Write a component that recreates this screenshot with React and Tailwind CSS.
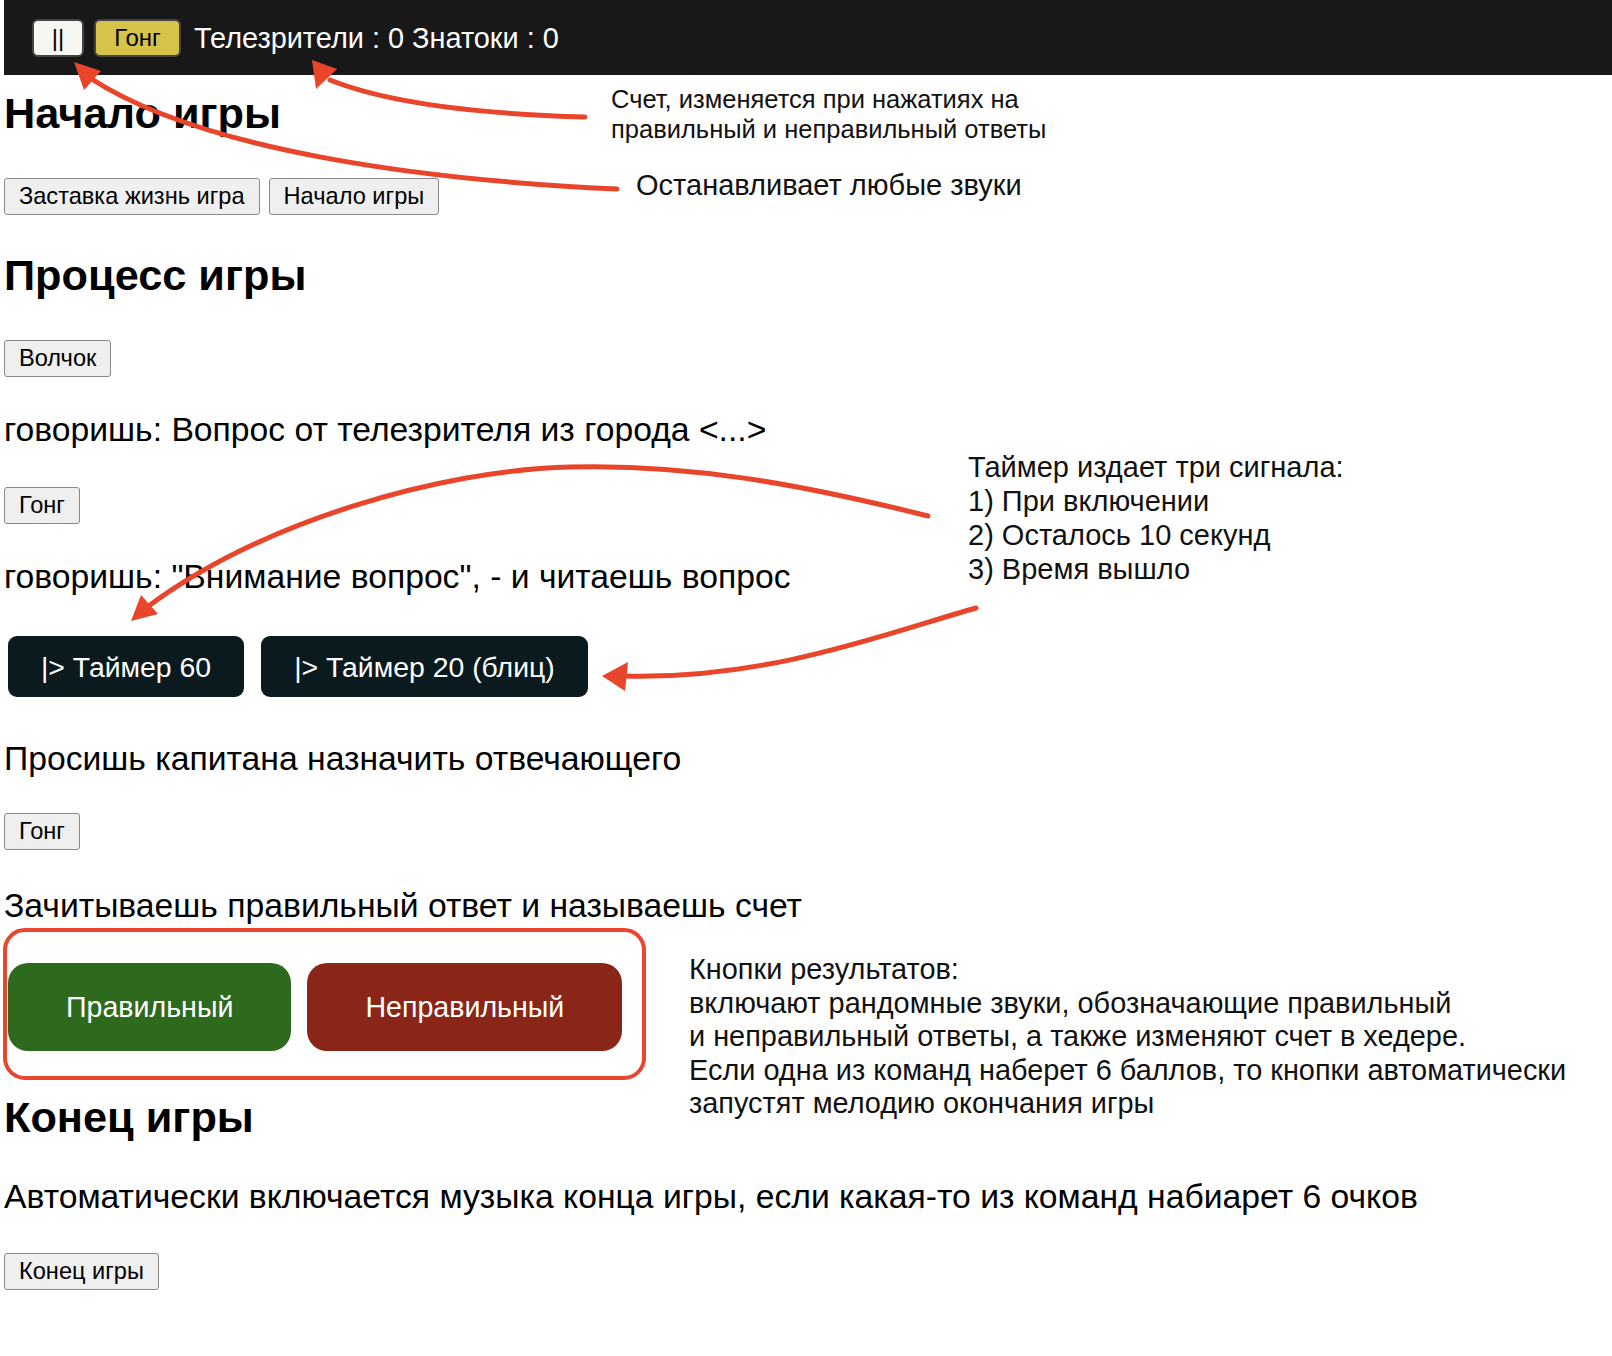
import React from "react";

function Btn({ children }) {
  return (
    <button className="h-[37px] px-[14px] text-[23.6px] leading-[27px] bg-[#efefef] border border-[#8a8a8a] rounded-[3px] text-black">
      {children}
    </button>
  );
}

function Arrows() {
  const c = "#e8452b";
  return (
    <svg
      className="absolute left-0 top-0 pointer-events-none"
      width="1612"
      height="1356"
      viewBox="0 0 1612 1356"
    >
      <g fill="none" stroke={c} strokeWidth="5" strokeLinecap="round">
        <path d="M585,117 C480,114 390,104 330,80" />
        <path d="M617,189 C420,180 200,150 90,78" />
        <path d="M928,516 C800,484 690,464 570,467 C440,470 260,522 146,608" />
        <path d="M976,608 C890,632 770,680 624,676" />
      </g>
      <g fill={c}>
        <polygon points="312,60 337,69 316,89" />
        <polygon points="74,62 101,71 84,90" />
        <polygon points="131,621 158,614 141,595" />
        <polygon points="602,676 628,662 625,691" />
      </g>
    </svg>
  );
}

export default function App() {
  return (
    <div className="relative min-h-[1356px] w-[1612px] bg-white text-black font-['Liberation_Sans',Arial,sans-serif] pl-[4px]">
      <header className="h-[75px] bg-[#181818] flex items-center pl-[28px]">
        <button className="w-[52px] h-[38px] rounded-[6px] border-2 border-[#454545] bg-[#f6f7f2] text-[24px] leading-none text-black">
          ||
        </button>
        <button className="ml-[10px] w-[87px] h-[38px] rounded-[6px] border-2 border-[#454545] bg-[#d5c34a] text-[24px] leading-none text-black">
          Гонг
        </button>
        <span className="ml-[13px] text-[28.9px] leading-[32px] text-white">
          Телезрители : 0 Знатоки : 0
        </span>
      </header>

      <h1 className="mt-[14px] text-[43.3px] leading-[48px] font-bold">Начало игры</h1>
      <div className="mt-[41px] flex items-start gap-[9px]">
        <Btn>Заставка жизнь игра</Btn>
        <Btn>Начало игры</Btn>
      </div>

      <h2 className="mt-[36px] text-[43.3px] leading-[48px] font-bold">Процесс игры</h2>
      <div className="mt-[41px] flex">
        <Btn>Волчок</Btn>
      </div>
      <p className="mt-[33px] text-[33.7px] leading-[38px]">
        говоришь: Вопрос от телезрителя из города &lt;...&gt;
      </p>
      <div className="mt-[39px] flex">
        <Btn>Гонг</Btn>
      </div>
      <p className="mt-[33px] text-[33.7px] leading-[38px]">
        говоришь: "Внимание вопрос", - и читаешь вопрос
      </p>
      <div className="mt-[41px] flex items-start gap-[17px] pl-[4px]">
        <button className="h-[61px] px-[33px] rounded-[9px] bg-[#0a1a1f] text-white text-[28.4px] leading-[32px]">
          |&gt; Таймер 60
        </button>
        <button className="h-[61px] px-[33px] rounded-[9px] bg-[#0a1a1f] text-white text-[28.4px] leading-[32px]">
          |&gt; Таймер 20 (блиц)
        </button>
      </div>
      <p className="mt-[42px] text-[33.7px] leading-[38px]">
        Просишь капитана назначить отвечающего
      </p>
      <div className="mt-[36px] flex">
        <Btn>Гонг</Btn>
      </div>
      <p className="mt-[36px] text-[33.7px] leading-[38px]">
        Зачитываешь правильный ответ и называешь счет
      </p>
      <div className="mt-[39px] flex items-start gap-[16px] pl-[4px]">
        <button className="h-[88px] px-[58px] rounded-[20px] bg-[#2e6a1e] text-white text-[28.6px] leading-[32px]">
          Правильный
        </button>
        <button className="h-[88px] px-[58px] rounded-[20px] bg-[#8a2617] text-white text-[28.6px] leading-[32px]">
          Неправильный
        </button>
      </div>

      <h2 className="mt-[42px] text-[43.3px] leading-[48px] font-bold">Конец игры</h2>
      <p className="mt-[36px] text-[33.7px] leading-[38px]">
        Автоматически включается музыка конца игры, если какая-то из команд набиарет 6 очков
      </p>
      <div className="mt-[38px] flex">
        <Btn>Конец игры</Btn>
      </div>

      {/* annotations */}
      <div className="absolute left-[3px] top-[928px] w-[643px] h-[152px] border-4 border-[#e8472d] rounded-[22px] pointer-events-none" />

      <div className="absolute left-[611px] top-[84px] text-[25.5px] leading-[30px] text-[#111]">
        <div>Счет, изменяется при нажатиях на</div>
        <div>правильный и неправильный ответы</div>
      </div>
      <div className="absolute left-[636px] top-[168px] text-[29px] leading-[34px] text-[#111]">
        Останавливает любые звуки
      </div>
      <div className="absolute left-[968px] top-[450px] text-[29px] leading-[34px] text-[#111]">
        <div>Таймер издает три сигнала:</div>
        <div>1) При включении</div>
        <div>2) Осталось 10 секунд</div>
        <div>3) Время вышло</div>
      </div>
      <div className="absolute left-[689px] top-[953px] text-[28.9px] leading-[33.5px] text-[#111]">
        <div>Кнопки результатов:</div>
        <div>включают рандомные звуки, обозначающие правильный</div>
        <div>и неправильный ответы, а также изменяют счет в хедере.</div>
        <div>Если одна из команд наберет 6 баллов, то кнопки автоматически</div>
        <div>запустят мелодию окончания игры</div>
      </div>

      <Arrows />
    </div>
  );
}
